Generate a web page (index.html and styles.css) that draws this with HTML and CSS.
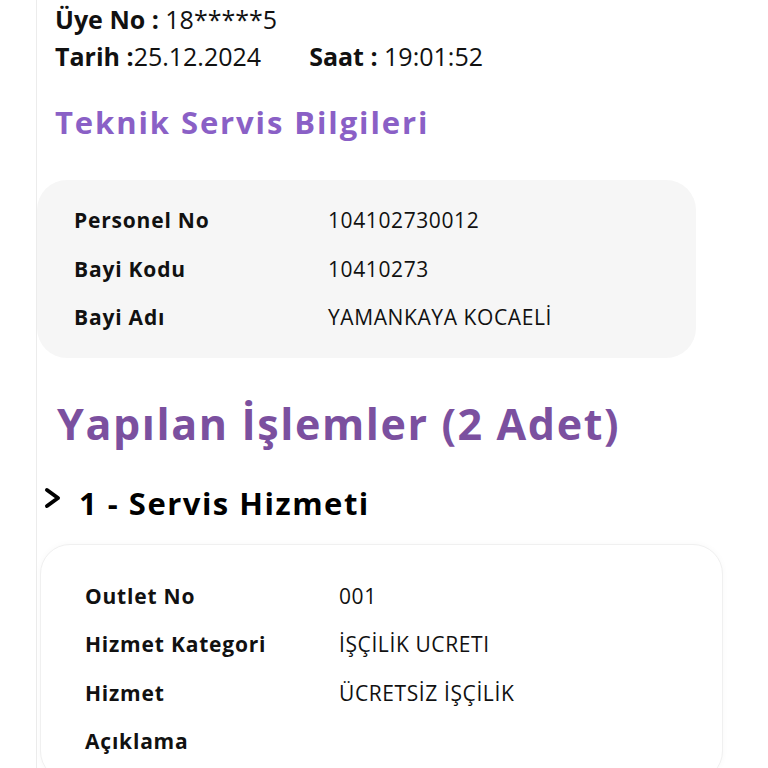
FILE: index.html
```html
<!DOCTYPE html>
<html lang="tr">
  <head>
    <meta charset="UTF-8" />
    <meta name="viewport" content="width=device-width, initial-scale=1.0" />
    <title>Servis Formu</title>
    <link rel="stylesheet" href="styles.css">
  </head>
  <body>
    <div class="page">
      <div class="head">
        <div class="head-line"><span><b>Üye No :</b> 18*****5</span></div>
        <div class="head-line">
          <span><b>Tarih :</b>25.12.2024</span>
          <span class="saat"><b>Saat :</b> 19:01:52</span>
        </div>
      </div>

      <h2 class="title-sm">Teknik Servis Bilgileri</h2>

      <div class="card grey">
        <div class="row"><div class="label">Personel No</div><div class="value">104102730012</div></div>
        <div class="row"><div class="label">Bayi Kodu</div><div class="value">10410273</div></div>
        <div class="row"><div class="label">Bayi Adı</div><div class="value">YAMANKAYA KOCAELİ</div></div>
      </div>

      <h1 class="title-lg">Yapılan İşlemler (2 Adet)</h1>

      <div class="item-head">
        <svg class="chev" width="18" height="22" viewBox="0 0 18 22">
          <path d="M3 3 L14 11 L3 19" fill="none" stroke="#000" stroke-width="4" stroke-linecap="round" stroke-linejoin="round" />
        </svg>
        <span>1 - Servis Hizmeti</span>
      </div>

      <div class="card white">
        <div class="row"><div class="label">Outlet No</div><div class="value">001</div></div>
        <div class="row"><div class="label">Hizmet Kategori</div><div class="value">İŞÇİLİK UCRETI</div></div>
        <div class="row"><div class="label">Hizmet</div><div class="value">ÜCRETSİZ İŞÇİLİK</div></div>
        <div class="row"><div class="label">Açıklama</div><div class="value"></div></div>
      </div>
    </div>
  </body>
</html>
```

FILE: styles.css
```css
* {
  box-sizing: border-box;
  margin: 0;
  padding: 0;
}
body {
  font-family: "Open Sans", "DejaVu Sans", sans-serif;
  background: #fff;
  color: #111;
  height: 768px;
  overflow: hidden;
}
.page {
  margin-left: 36px;
  border-left: 1px solid #ececec;
  min-height: 768px;
  padding-top: 1px;
}
.head {
  padding-left: 18px;
  font-size: 25px;
  line-height: 37px;
  font-weight: 400;
  color: #111;
}
.head b {
  font-weight: 700;
}
.head-line {
  display: flex;
}
.saat {
  margin-left: 48px;
}
.title-sm {
  padding-left: 18px;
  margin-top: 27px;
  font-size: 31px;
  line-height: 40px;
  font-weight: 700;
  letter-spacing: 1.9px;
  color: #8a60c6;
}
.card {
  border-radius: 30px;
  display: flex;
  flex-direction: column;
}
.card.grey {
  background: #f6f6f6;
  width: 659px;
  margin-top: 38px;
  padding: 16px 0 16px 37px;
}
.card.white {
  background: #fff;
  border: 1px solid #f0f0f0;
  box-shadow: 0 0 6px rgba(0, 0, 0, 0.03);
  width: 683px;
  margin-left: 3px;
  margin-top: 19px;
  padding: 27px 0 14px 44px;
}
.row {
  display: flex;
  height: 48.5px;
  align-items: center;
  font-size: 21px;
}
.label {
  width: 254px;
  font-weight: 700;
  letter-spacing: 0.8px;
}
.value {
  font-weight: 400;
  letter-spacing: 0.6px;
}
.title-lg {
  padding-left: 20px;
  margin-top: 38px;
  font-size: 43px;
  line-height: 56px;
  font-weight: 700;
  letter-spacing: 1.6px;
  color: #7b509f;
}
.item-head {
  display: flex;
  align-items: center;
  margin-top: 29px;
  padding-left: 7px;
  font-size: 31px;
  font-weight: 700;
  letter-spacing: 1.5px;
  color: #000;
  height: 44px;
}
.chev {
  margin-right: 17px;
  margin-top: -10px;
}
```
